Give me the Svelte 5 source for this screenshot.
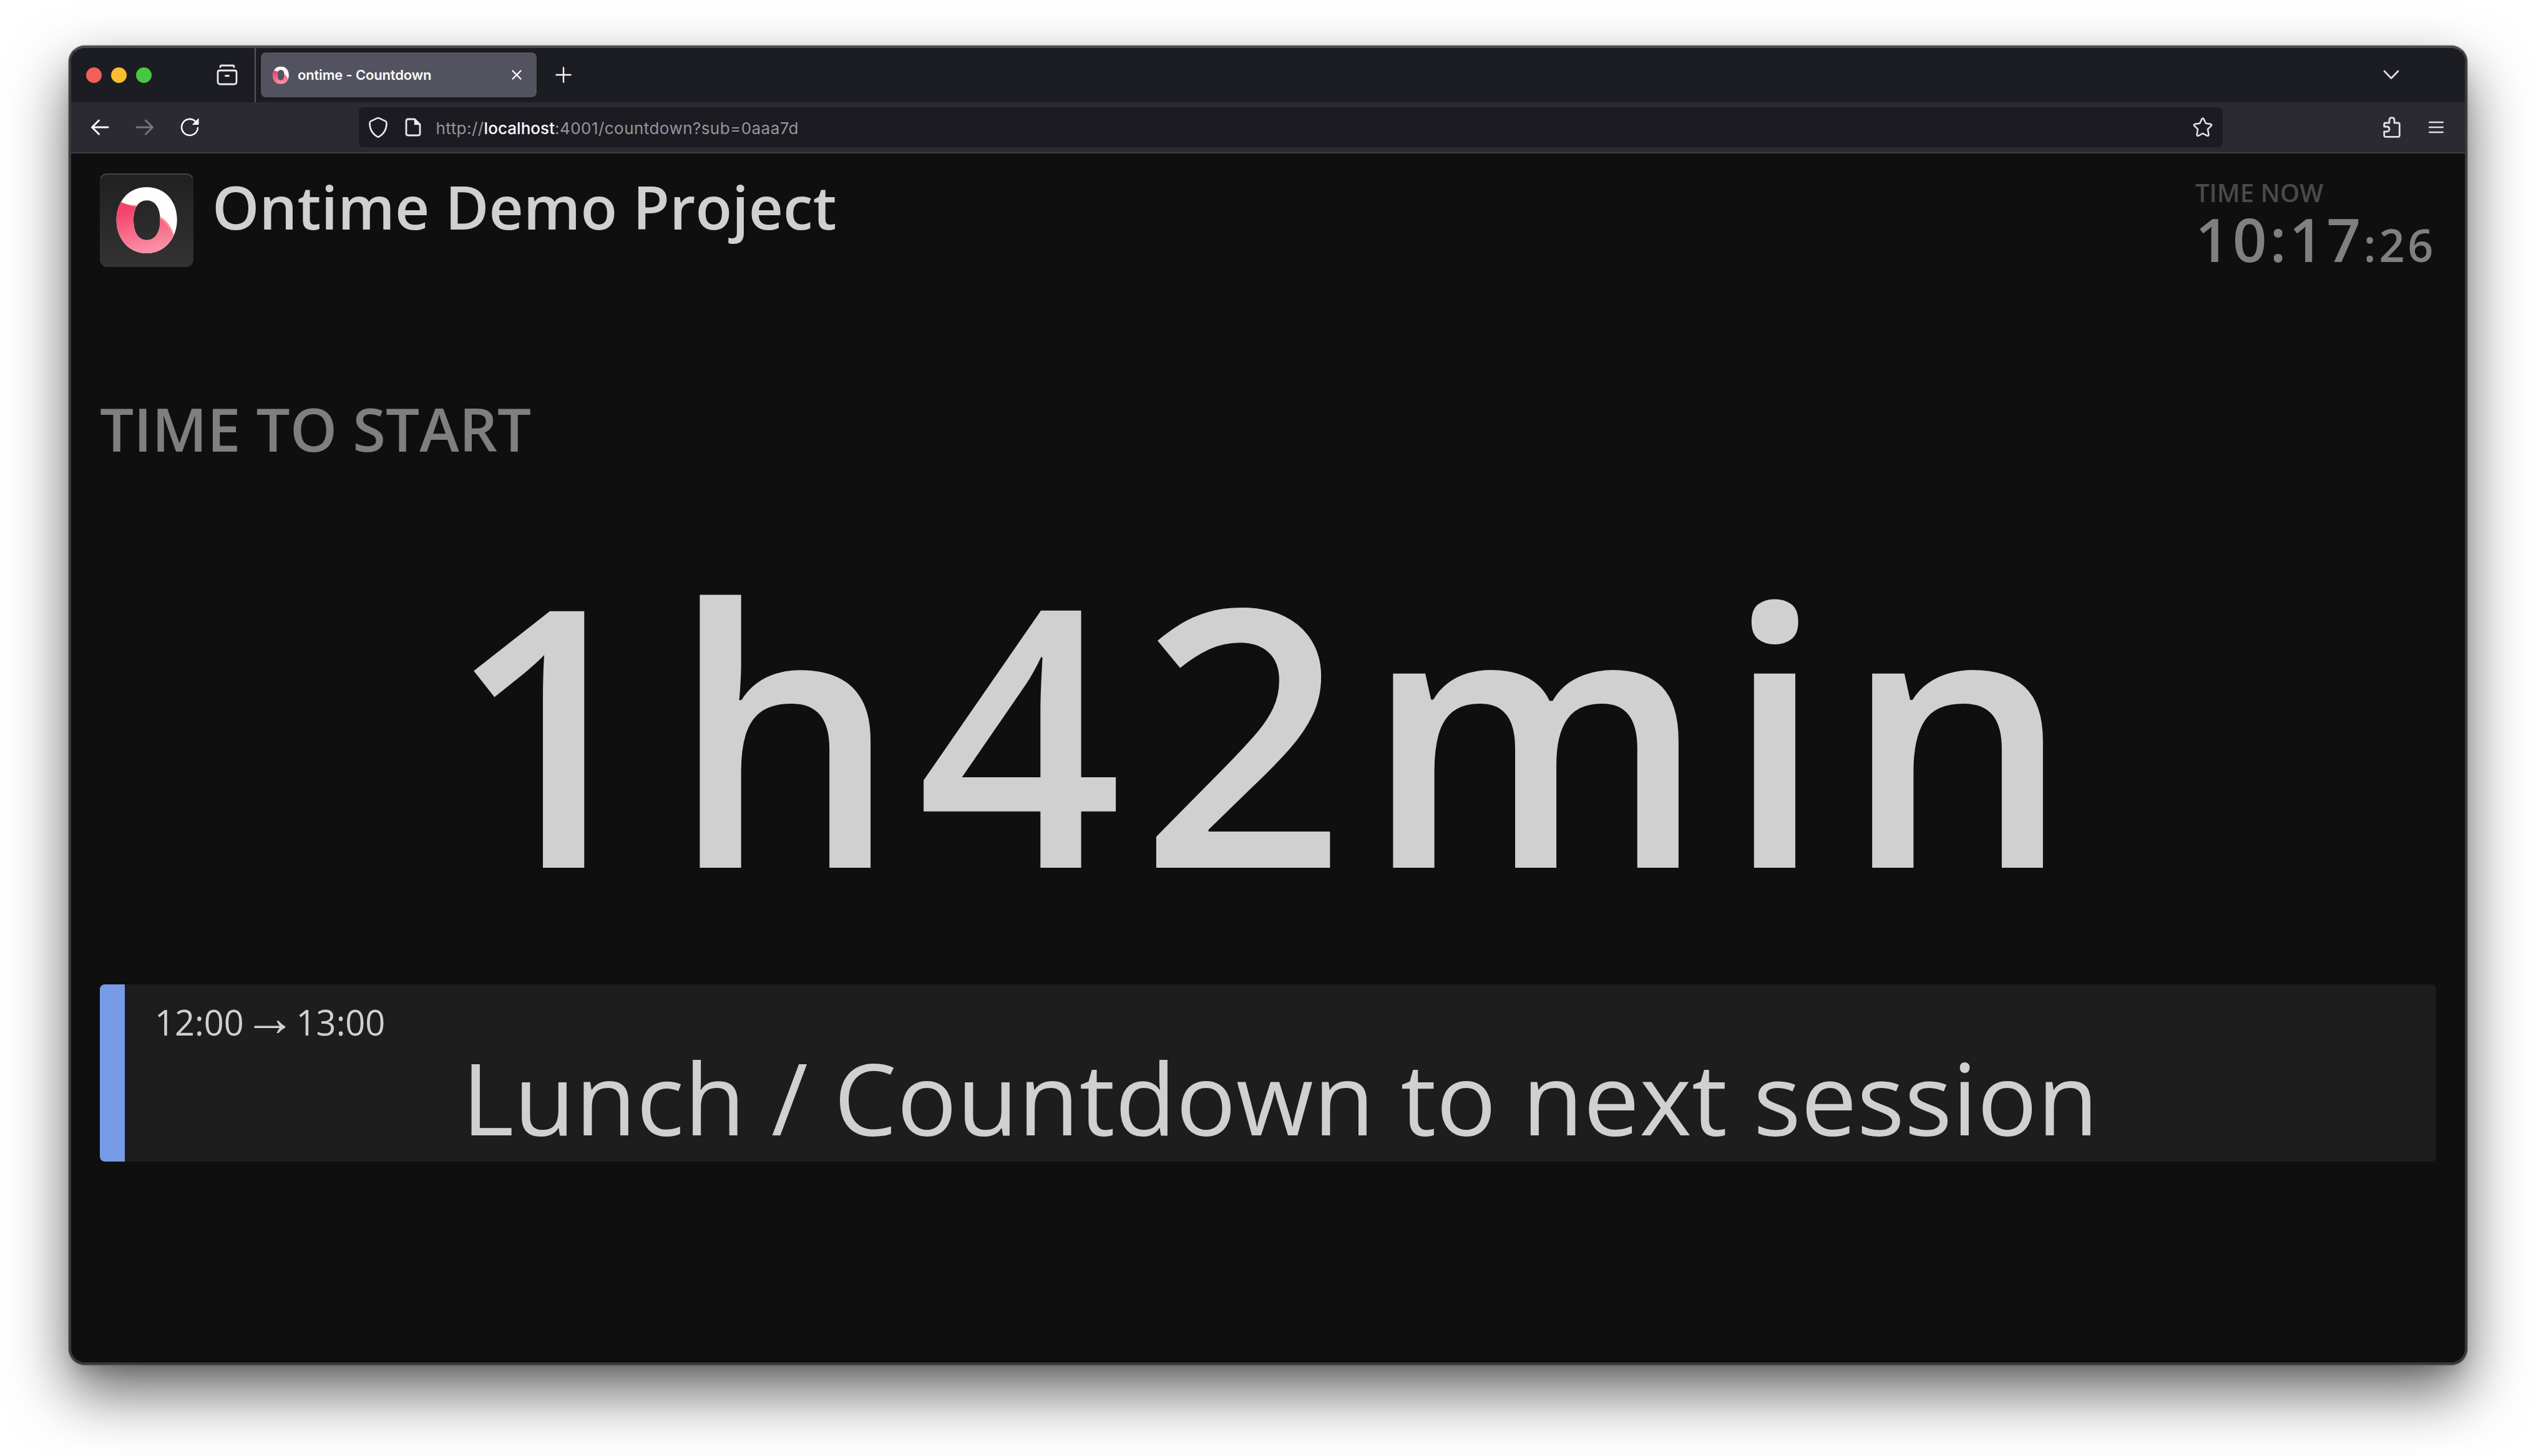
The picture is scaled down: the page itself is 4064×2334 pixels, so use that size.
<script lang="ts">
    const clock = '10:17';
    const seconds = ':26';
    const title = 'Ontime Demo Project';
</script>

<svelte:head><title>ontime - Countdown</title></svelte:head>

<div class="desktop">
<div class="window">
    <div class="tabs">
        <div class="lights">
            <i class="close"></i>
            <i class="minimise"></i>
            <i class="zoom"></i>
        </div>
        <svg class="archive" viewBox="0 0 34 34" fill="none" stroke="#e9e9ee" stroke-width="2.8" stroke-linecap="round">
            <path d="M6 4.5V4Q6 2 8 2H26Q28 2 28 4V4.5" />
            <path d="M5 10H29Q32 10 32 13V28Q32 32 28 32H6Q2 32 2 28V13Q2 10 5 10Z" />
            <path d="M14.5 18.5H19.5" stroke-width="3" />
        </svg>
        <div class="tab">
            <svg class="favicon" viewBox="186 300 98 106">
                <use href="#ring" />
            </svg>
            <span class="tab-title">ontime - Countdown</span>
            <svg class="tab-close" viewBox="0 0 16 16" stroke="#fbfbfe" stroke-width="2.4" stroke-linecap="round">
                <path d="M1.5 1.5L14.5 14.5M14.5 1.5L1.5 14.5" />
            </svg>
        </div>
        <svg class="plus" viewBox="0 0 26 26" stroke="#fbfbfe" stroke-width="2.4" stroke-linecap="round">
            <path d="M13 1.5V24.5M1.5 13H24.5" />
        </svg>
        <svg class="chevron" viewBox="0 0 26 16" fill="none" stroke="#dcdce2" stroke-width="2.8" stroke-linecap="round" stroke-linejoin="round">
            <path d="M2 2L13 13.5L24 2" />
        </svg>
    </div>

    <div class="toolbar">
        <svg class="back" viewBox="0 0 30 28" fill="none" stroke="#fbfbfe" stroke-width="3" stroke-linecap="round" stroke-linejoin="round">
            <path d="M28 14H2.5M13.5 3L2.5 14L13.5 25" />
        </svg>
        <svg class="forward" viewBox="0 0 30 28" fill="none" stroke="#77767f" stroke-width="3" stroke-linecap="round" stroke-linejoin="round">
            <path d="M2 14H27.5M16.5 3L27.5 14L16.5 25" />
        </svg>
        <svg class="reload" viewBox="0 0 30 30" fill="none" stroke="#fbfbfe" stroke-width="2.6" stroke-linecap="round">
            <path d="M28 16A13 13 0 1 1 24 5.5" />
            <path d="M29 1.5V10.5H20Z" fill="#fbfbfe" stroke-width="1" stroke-linejoin="round" />
        </svg>
        <div class="urlbar">
            <svg class="shield" viewBox="0 0 32 34" fill="none" stroke="#e9e9ee" stroke-width="2.6" stroke-linejoin="round">
                <path d="M14.5 2.4Q16 1.6 17.5 2.4L27.5 7.2Q29.5 8.2 29.5 10.5Q29.5 25 17.6 32Q16 32.8 14.4 32Q2.5 25 2.5 10.5Q2.5 8.2 4.5 7.2Z" />
            </svg>
            <svg class="page" viewBox="0 0 26 30" fill="none" stroke="#e9e9ee" stroke-width="2.8" stroke-linejoin="round">
                <path d="M15.5 2H5Q2 2 2 5V25Q2 28 5 28H21Q24 28 24 25V10.5Z" />
                <path d="M15.5 2V10.5H24Z" fill="#e9e9ee" stroke-width="1.5" />
            </svg>
            <span class="url">http://<b>localhost</b>:4001/countdown?sub=0aaa7d</span>
            <svg class="star" viewBox="0 0 32 32" fill="none" stroke="#e0e0e6" stroke-width="2.6" stroke-linejoin="round">
                <path d="M14.6 2.6Q16 0.6 17.4 2.6L20.8 9.8L28.5 10.9Q31.2 11.5 29.5 13.6L24 19.2L25.4 27.6Q25.6 30.5 23 29.6L16 25.8L9 29.6Q6.4 30.5 6.6 27.6L8 19.2L2.5 13.6Q0.8 11.5 3.5 10.9L11.2 9.8Z" />
            </svg>
        </div>
        <svg class="puzzle" viewBox="0 0 28 34" fill="none" stroke="#e0e0e6" stroke-width="2.8" stroke-linejoin="round">
            <path d="M10 10V5.5Q10 1.6 14 1.6Q18 1.6 18 5.5V10H24Q26.3 10 26.3 12.3V30Q26.3 32.3 24 32.3H4Q1.7 32.3 1.7 30V24H5.5Q10 24 10 20Q10 16 5.5 16H1.7V12.3Q1.7 10 4 10Z" />
        </svg>
        <svg class="menu" viewBox="0 0 24 20" stroke="#e0e0e6" stroke-width="2.6" stroke-linecap="round">
            <path d="M1.3 2H22.7M1.3 10H22.7M1.3 18H22.7" />
        </svg>
    </div>

    <main>
        <header>
            <svg class="logo" viewBox="160 278 150 150">
                <defs>
                    <linearGradient id="tile" x1="0" y1="0" x2="0" y2="1">
                        <stop offset="0" stop-color="#202020" />
                        <stop offset="1" stop-color="#333" />
                    </linearGradient>
                    <linearGradient id="pink" x1="0" y1="0" x2="0.25" y2="1">
                        <stop offset="0.25" stop-color="#f4436c" />
                        <stop offset="1" stop-color="#fa90a6" />
                    </linearGradient>
                    <clipPath id="oval">
                        <path clip-rule="evenodd" d="M235.2 300C264 300 283.7 322 283.7 352S264 406 235.2 406S186.7 383 186.7 353S206 300 235.2 300ZM235.3 321.3C222 321.3 214 333 214 353S222 385 235.3 385S256.7 373 256.7 353S248.5 321.3 235.3 321.3Z" />
                    </clipPath>
                    <g id="ring" clip-path="url(#oval)">
                        <rect x="186" y="299" width="98" height="108" fill="#fffefc" />
                        <path d="M186 320Q204 330 220 329L240 340L256 347Q272 355 279 377V407H186Z" fill="#fb9590" />
                        <path d="M186 320Q202 329 217 331L240 345L256 350Q269 358 278 379L284 407H186Z" fill="url(#pink)" />
                    </g>
                </defs>
                <rect x="160" y="278" width="150" height="150" rx="12" fill="url(#tile)" />
                <path d="M161 286Q164 279 172 279H298Q306 279 309 286" fill="none" stroke="#444" stroke-width="2" />
                <use href="#ring" />
            </svg>
            <h1>{title}</h1>
            <div class="clock">
                <div class="label">TIME NOW</div>
                <div class="time">{clock}<span>{seconds}</span></div>
            </div>
        </header>

        <div class="status">TIME TO START</div>
        <div class="timer">1h42min</div>

        <div class="event">
            <div class="schedule">12:00 <span class="arrow">→</span> 13:00</div>
            <div class="event-title">Lunch / Countdown to next session</div>
        </div>
    </main>
</div>
</div>

<style>
    :global(body) {
        background: #fff;
    }

    svg {
        display: block;
        flex: none;
    }

    .desktop {
        box-sizing: border-box;
        width: 4064px;
        height: 2334px;
        padding: 73px 110px 0;
        overflow: hidden;
    }

    .window {
        box-sizing: border-box;
        width: 3844px;
        height: 2115px;
        border: 4px solid #3a3a3b;
        border-top-color: #4a4a4b;
        border-radius: 26px;
        overflow: hidden;
        background: #0f0f0f;
        box-shadow:
            0 0 2px rgba(0, 0, 0, 0.6),
            0 16px 28px -10px rgba(0, 0, 0, 0.18),
            0 44px 96px rgba(0, 0, 0, 0.6);
        display: flex;
        flex-direction: column;
    }

    .tabs {
        height: 87px;
        box-sizing: border-box;
        background: #1c1d22;
        display: flex;
        align-items: center;
        padding: 0 105px 1px 0;
    }

    .lights {
        display: flex;
        gap: 15px;
        margin-left: 23.5px;
    }

    .lights i {
        width: 25px;
        height: 25px;
        border-radius: 50%;
    }

    .close {
        background: #f25f57;
    }

    .minimise {
        background: #f9bd2e;
    }

    .zoom {
        background: #48c840;
    }

    .archive {
        width: 34px;
        height: 34px;
        margin-left: 104.5px;
    }

    .tab {
        position: relative;
        width: 442px;
        height: 72px;
        box-sizing: border-box;
        margin-left: 37px;
        padding: 0 24px 0 19px;
        border-radius: 8px;
        background: #53535f;
        box-shadow: 0 0 4px rgba(0, 0, 0, 0.4);
        display: flex;
        align-items: center;
    }

    .tab::before {
        content: '';
        position: absolute;
        left: -10px;
        top: -8px;
        width: 2px;
        height: 88px;
        background: #55555a;
    }

    .favicon {
        width: 26px;
        height: 29px;
    }

    .tab-title {
        margin-left: 14px;
        font: 600 22px/30px Inter, sans-serif;
        letter-spacing: -0.17px;
        color: #fbfbfe;
        white-space: nowrap;
    }

    .tab-close {
        width: 16px;
        height: 16px;
        margin-left: auto;
    }

    .plus {
        width: 26px;
        height: 26px;
        margin-left: 30px;
    }

    .chevron {
        width: 26px;
        height: 16px;
        margin-left: auto;
    }

    .toolbar {
        height: 82px;
        box-sizing: border-box;
        padding: 0 34px 0 31px;
        background: #2b2a33;
        border-bottom: 2px solid #3b3b40;
        display: flex;
        align-items: center;
    }

    .back, .forward {
        width: 30px;
        height: 28px;
    }

    .forward {
        margin-left: 41.5px;
    }

    .reload {
        width: 30px;
        height: 30px;
        margin-left: 42px;
    }

    .urlbar {
        width: 2987px;
        height: 64px;
        box-sizing: border-box;
        margin-left: 256px;
        padding: 0 16px 0 15px;
        border-radius: 8px;
        background: #1c1b22;
        display: flex;
        align-items: center;
    }

    .shield {
        width: 32px;
        height: 34px;
    }

    .page {
        width: 26px;
        height: 30px;
        margin-left: 27px;
    }

    .url {
        margin-left: 24px;
        padding-top: 4px;
        font: 400 26px/36px Inter, sans-serif;
        letter-spacing: 0.45px;
        color: #96959c;
        white-space: nowrap;
    }

    .url b {
        font-weight: 500;
        letter-spacing: 0.05px;
        color: #fbfbfe;
    }

    .star {
        width: 32px;
        height: 32px;
        margin-left: auto;
    }

    .puzzle {
        width: 28px;
        height: 34px;
        margin-left: 257px;
    }

    .menu {
        width: 24px;
        height: 20px;
        margin-left: auto;
    }

    main {
        flex: 1;
        padding: 32px 46px 0;
        font-family: 'Open Sans', sans-serif;
        color: #d0d0d0;
    }

    header {
        display: flex;
        height: 150px;
    }

    .logo {
        width: 150px;
        height: 150px;
    }

    h1 {
        margin: 0 0 0 30px;
        font-size: 96px;
        font-weight: 600;
        line-height: 106px;
        white-space: nowrap;
    }

    .clock {
        margin-left: auto;
        width: 386px;
        font-weight: 600;
        white-space: nowrap;
    }

    .label {
        margin-top: 8px;
        font-size: 40px;
        line-height: 45px;
        color: #4a4a4a;
    }

    .time {
        font-size: 96px;
        line-height: 104px;
        letter-spacing: 0.05em;
        color: #808080;
    }

    .time span {
        font-size: 72px;
    }

    .status {
        margin-top: 191px;
        font-size: 96px;
        font-weight: 600;
        line-height: 136px;
        color: #7f7f7f;
    }

    .timer {
        margin-top: 53px;
        font-size: 576px;
        font-weight: 600;
        line-height: 720px;
        letter-spacing: 0.05em;
        text-align: center;
        white-space: nowrap;
    }

    .event {
        box-sizing: border-box;
        height: 284px;
        margin-top: 50px;
        padding: 22px 49px 0 48px;
        border-left: 40px solid #779be7;
        border-radius: 8px;
        background: #1d1d1d;
    }

    .schedule {
        font-size: 56px;
        line-height: 76px;
    }

    .arrow {
        margin: 0 -14.5px 0 -14.8px;
        font-family: 'Liberation Serif', serif;
        font-size: 84px;
        line-height: 0;
    }

    .event-title {
        font-size: 160px;
        line-height: 164px;
        text-align: center;
        white-space: nowrap;
    }
</style>
